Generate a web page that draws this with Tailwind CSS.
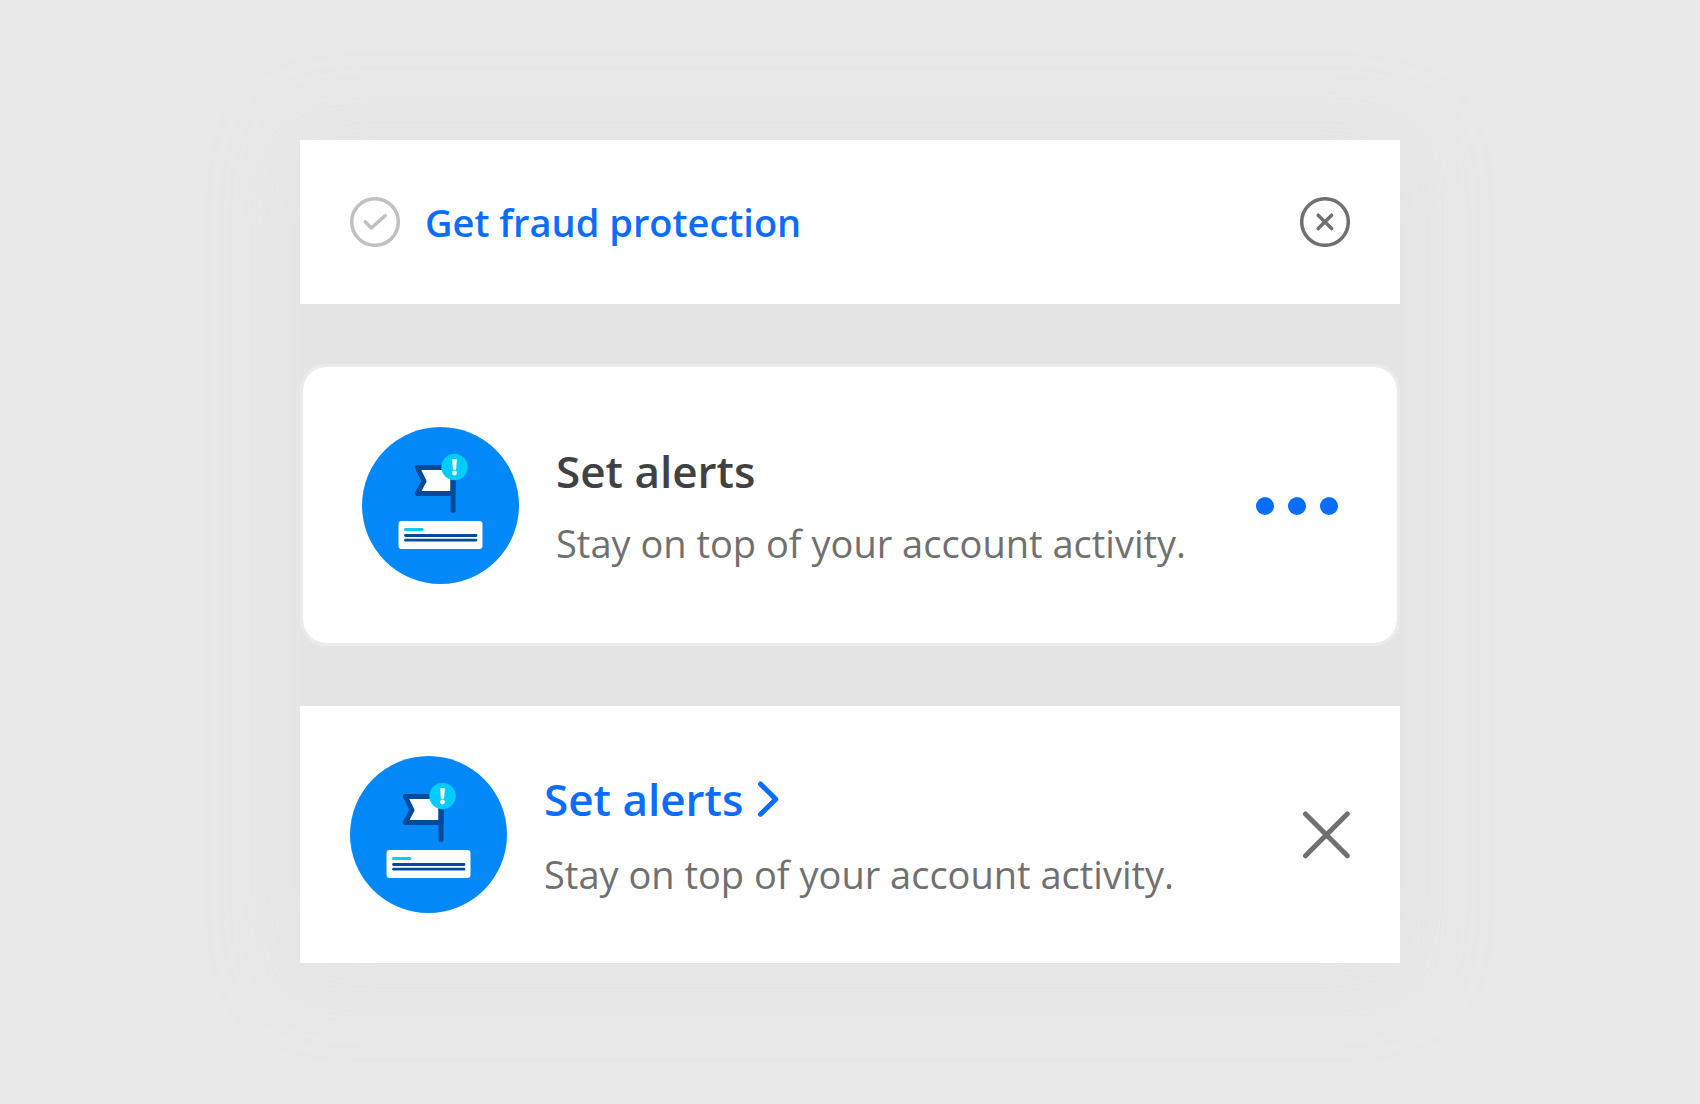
<!DOCTYPE html>
<html lang="en">
<head>
<meta charset="utf-8">
<meta name="viewport" content="width=device-width, initial-scale=1">
<title>Action cards</title>
<script src="https://cdn.jsdelivr.net/npm/@tailwindcss/browser@4"></script>
</head>
<body class="flex min-h-screen items-center justify-center bg-[#e9e9e9] pb-px font-['Open_Sans',sans-serif]">
<svg class="hidden" aria-hidden="true">
  <symbol id="alert-flag" viewBox="0 0 157 157">
    <circle cx="78.500" cy="78.500" r="78.500" fill="#0388fa"/>
    <path d="M91 40.500H55.300L62 54 55.300 66.500H91z" fill="#fff" stroke="#044a99" stroke-width="5" stroke-linejoin="round"/>
    <path d="M91 40.500V83.500" stroke="#044a99" stroke-width="5" stroke-linecap="round"/>
    <circle cx="92.500" cy="40" r="13.200" fill="#00ccff"/>
    <path d="M90.200 33q0-1 1-1h2.600q1 0 1 1l-.6 8.700q-.1 1-1 1h-1.400q-.9 0-1-1z" fill="#fff"/>
    <circle cx="92.500" cy="46" r="2.400" fill="#fff"/>
    <rect x="36.500" y="94" width="84" height="28" rx="3" fill="#fff"/>
    <path d="M43.500 102.500h16.500" stroke="#00ccff" stroke-width="3" stroke-linecap="round"/>
    <path d="M43.500 108.500h70.500M43.500 113.200h70.500" stroke="#044a99" stroke-width="2.800" stroke-linecap="round"/>
  </symbol>
</svg>
<main class="flex w-full max-w-[1100px] flex-col gap-[60px] bg-[#e4e4e4] shadow-[0_6px_80px_20px_#e4e4e4]">
  <section class="flex items-center justify-between bg-white px-[50px] py-[57px]">
    <div class="flex items-center gap-[25px]">
      <svg class="size-[50px] shrink-0" viewBox="0 0 50 50" fill="none" stroke="#c0c0c0" stroke-width="3.500" aria-hidden="true">
        <circle cx="25" cy="25" r="23.300"/>
        <path d="M15.200 24.700 21.400 31 35.200 18.600" stroke-linecap="round" stroke-linejoin="round"/>
      </svg>
      <a href="#" class="text-[38px] leading-[50px] font-semibold text-[#0a6dff]">Get fraud protection</a>
    </div>
    <button type="button" aria-label="Dismiss" class="shrink-0">
      <svg class="size-[50px]" viewBox="0 0 50 50" fill="none" stroke="#707070" stroke-width="3.500">
        <circle cx="25" cy="25" r="23.300"/>
        <path d="M18.200 18.200 31.600 31.600M31.600 18.200 18.200 31.600" stroke-linecap="round"/>
      </svg>
    </button>
  </section>

  <section class="flex items-center justify-between rounded-[26px] border-3 border-[#ebebeb] bg-white bg-clip-padding px-[59px] pt-[60px] pb-[59px]">
    <div class="flex items-center gap-[37px]">
      <svg class="size-[157px] shrink-0" aria-hidden="true"><use href="#alert-flag"/></svg>
      <div class="flex flex-col gap-4 pb-[2px]">
        <h2 class="text-[44px] leading-[60px] font-semibold text-[#404143]">Set alerts</h2>
        <p class="text-[38px] leading-[52px] text-[#707070]">Stay on top of your account activity.</p>
      </div>
    </div>
    <button type="button" aria-label="More options" class="flex shrink-0 gap-[14px]">
      <span class="size-[18px] rounded-full bg-[#0a6dff]"></span>
      <span class="size-[18px] rounded-full bg-[#0a6dff]"></span>
      <span class="size-[18px] rounded-full bg-[#0a6dff]"></span>
    </button>
  </section>

  <section class="flex items-center justify-between bg-white p-[50px]">
    <div class="flex items-center gap-[37px]">
      <svg class="size-[157px] shrink-0" aria-hidden="true"><use href="#alert-flag"/></svg>
      <div class="flex flex-col gap-[19px]">
        <h2 class="text-[44px] leading-[60px] font-semibold text-[#0a6dff]">
          <a href="#" class="flex items-center gap-[14px]">Set alerts
            <svg class="h-9 w-[22px]" viewBox="0 0 22 36" fill="none" stroke="currentColor" stroke-width="5" stroke-linecap="round" stroke-linejoin="round" aria-hidden="true"><path d="M3.500 3 18.800 18.200 3.500 33.200"/></svg>
          </a>
        </h2>
        <p class="text-[38px] leading-[52px] text-[#707070]">Stay on top of your account activity.</p>
      </div>
    </div>
    <button type="button" aria-label="Close" class="shrink-0">
      <svg class="size-12" viewBox="0 0 48 48" fill="none" stroke="#707070" stroke-width="5" stroke-linecap="round"><path d="M3.500 3 45.300 44.800M45.300 3 3.500 44.800"/></svg>
    </button>
  </section>
</main>
</body>
</html>
